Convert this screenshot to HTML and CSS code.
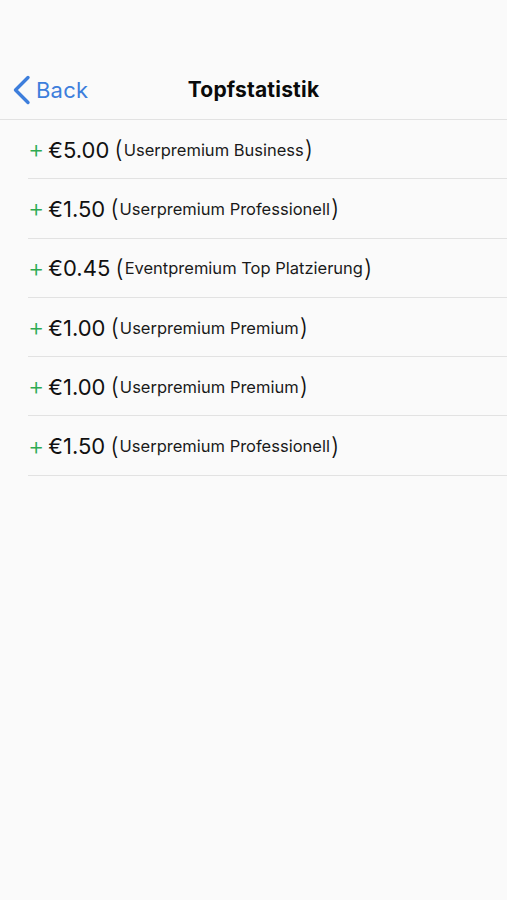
FILE: index.html
```html
<!DOCTYPE html>
<html lang="de">
<head>
<meta charset="utf-8">
<title>Topfstatistik</title>
<link rel="stylesheet" href="styles.css">
</head>
<body>
<div class="screen">
  <div class="status"></div>
  <header class="nav">
    <a class="back" href="#">
      <svg class="chev" width="20" height="30" viewBox="0 0 20 30" aria-hidden="true">
        <path d="M16 2.5 L3.5 15 L16 27.5" fill="none" stroke="currentColor" stroke-width="3.4" stroke-linecap="round" stroke-linejoin="round"/>
      </svg>
      <span class="back-label">Back</span>
    </a>
    <h1 class="title">Topfstatistik</h1>
    <span class="spacer"></span>
  </header>
  <ul class="list">
    <li class="row"><span class="plus">+</span><span class="amount">€5.00</span><span class="paren">(</span><span class="desc">Userpremium Business</span><span class="paren">)</span></li>
    <li class="row"><span class="plus">+</span><span class="amount">€1.50</span><span class="paren">(</span><span class="desc">Userpremium Professionell</span><span class="paren">)</span></li>
    <li class="row"><span class="plus">+</span><span class="amount">€0.45</span><span class="paren">(</span><span class="desc">Eventpremium Top Platzierung</span><span class="paren">)</span></li>
    <li class="row"><span class="plus">+</span><span class="amount">€1.00</span><span class="paren">(</span><span class="desc">Userpremium Premium</span><span class="paren">)</span></li>
    <li class="row"><span class="plus">+</span><span class="amount">€1.00</span><span class="paren">(</span><span class="desc">Userpremium Premium</span><span class="paren">)</span></li>
    <li class="row"><span class="plus">+</span><span class="amount">€1.50</span><span class="paren">(</span><span class="desc">Userpremium Professionell</span><span class="paren">)</span></li>
  </ul>
</div>
</body>
</html>
```
FILE: styles.css
```css
* { box-sizing: border-box; }
html, body {
  margin: 0;
  padding: 0;
  background: #fafafa;
}
body {
  font-family: Inter, "Liberation Sans", Arial, sans-serif;
  color: #111;
  width: 507px;
  height: 900px;
  overflow: hidden;
}
.status { height: 60px; }
.nav {
  height: 60px;
  display: grid;
  grid-template-columns: 1fr auto 1fr;
  align-items: center;
  border-bottom: 1px solid #e2e2e2;
}
.back {
  display: flex;
  align-items: center;
  gap: 4px;
  padding-left: 12px;
  color: #3d7edc;
  text-decoration: none;
  font-size: 22px;
  letter-spacing: 0.2px;
}
.chev { display: block; }
.title {
  margin: 0;
  font-size: 21px;
  font-weight: 700;
  color: #0a0a0a;
  letter-spacing: 0.2px;
}
.list {
  list-style: none;
  margin: 0;
  padding: 0 0 0 28px;
}
.row {
  height: 59.3px;
  display: flex;
  align-items: center;
  border-bottom: 1px solid #e2e2e2;
  white-space: nowrap;
  padding-top: 1px;
}
.plus {
  color: #2eaa52;
  font-size: 25px;
  line-height: 1;
  margin-right: 4px;
  font-weight: 300;
}
.amount {
  font-size: 22px;
  color: #111;
  margin-right: 5px;
}
.paren {
  font-size: 24px;
  color: #111;
  font-weight: 300;
}
.desc {
  font-size: 16.5px;
  color: #1a1a1a;
  letter-spacing: 0;
  padding: 0 1px;
}
```
